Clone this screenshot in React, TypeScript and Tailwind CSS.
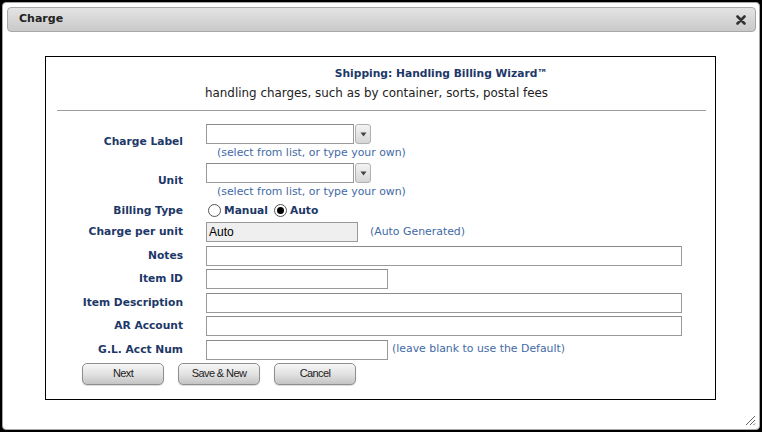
import React from 'react';

const labelCls = "w-[137px] shrink-0 pt-[1px] text-right text-[10.7px] font-bold text-[#1d3868] font-['DejaVu_Sans',sans-serif]";
const hintCls = "text-[10.9px] text-[#3f6aa6] font-['DejaVu_Sans',sans-serif] whitespace-nowrap";
const inputCls = "h-[20px] border border-[#9a9a9a] border-t-[#8a8a8a] bg-white";

const ComboField: React.FC<{ label: string }> = ({ label }) => (
  <div className="flex items-center h-[36px]">
    <div className={labelCls}>{label}</div>
    <div className="ml-[23px] flex flex-col">
      <div className="flex">
        <div className={`${inputCls} w-[148px]`} />
        <div className="ml-[1px] w-[16px] h-[20px] rounded-[3px] border border-[#b0b0b0] bg-gradient-to-b from-[#f4f4f4] to-[#d6d6d6] flex items-center justify-center">
          <svg width="7" height="5" viewBox="0 0 7 5">
            <path d="M0.5 0.5 L6.5 0.5 L3.5 4.5 Z" fill="#444" />
          </svg>
        </div>
      </div>
      <div className={`${hintCls} pl-[11px] leading-[15px] mt-[1px]`}>(select from list, or type your own)</div>
    </div>
  </div>
);

const TextRow: React.FC<{ label: string; width: string; hint?: string; hintGap?: string }> = ({ label, width, hint, hintGap }) => (
  <div className="flex items-center h-[20px]">
    <div className={labelCls}>{label}</div>
    <div className={`ml-[23px] ${inputCls} ${width}`} />
    {hint && <div className={`${hintCls} ${hintGap}`}>{hint}</div>}
  </div>
);

const Radio: React.FC<{ checked?: boolean }> = ({ checked }) => (
  <span className="w-[13px] h-[13px] rounded-full border border-[#555] bg-white flex items-center justify-center">
    {checked && <span className="w-[7px] h-[7px] rounded-full bg-black" />}
  </span>
);

const Btn: React.FC<{ children: React.ReactNode }> = ({ children }) => (
  <button className="w-[82px] h-[22px] rounded-[5px] border border-[#8e8e8e] bg-gradient-to-b from-[#f7f7f7] via-[#e2e2e2] to-[#c4c4c4] text-[11px] text-[#222] tracking-[-0.6px] font-['Liberation_Sans',Arial,sans-serif] shadow-[0_1px_1px_rgba(0,0,0,0.15)]">
    {children}
  </button>
);

export default function App() {
  return (
    <div className="w-[762px] h-[432px] bg-black p-[2px]">
      <div className="relative w-full h-full rounded-[4px] border border-[#a6a6a6] bg-white p-[4px] pr-[3px]">
        {/* title bar */}
        <div className="h-[25px] rounded-[4px] border border-[#a8a8a8] bg-gradient-to-b from-[#e4e4e4] to-[#c9c9c9] flex items-center justify-between pl-[11px] pr-[9px]">
          <span className="text-[11px] font-bold text-[#222] font-['DejaVu_Sans',sans-serif]">Charge</span>
          <svg width="10" height="10" viewBox="0 0 10 10">
            <path d="M1.5 1.5 L8.5 8.5 M8.5 1.5 L1.5 8.5" stroke="#333" strokeWidth="2.6" strokeLinecap="round" />
          </svg>
        </div>

        {/* wizard box */}
        <div className="ml-[38px] mt-[24px] w-[671px] h-[344px] border border-black">
          <div className="flex justify-end pr-[167px] pt-[10px]">
            <div className="flex flex-col items-end">
              <div className="text-[10.7px] leading-[14px] font-bold text-[#1d3868] font-['DejaVu_Sans',sans-serif]">
                Shipping: Handling Billing Wizard™
              </div>
              <div className="mt-[4px] text-[11.9px] leading-[16px] text-[#222] font-['DejaVu_Sans',sans-serif]">
                handling charges, such as by container, sorts, postal fees
              </div>
            </div>
          </div>
          <div className="mt-[9px] ml-[11px] mr-[9px] border-t border-[#9c9c9c]" />

          <div className="mt-[13px] flex flex-col">
            <ComboField label="Charge Label" />
            <div className="mt-[3px]">
              <ComboField label="Unit" />
            </div>
            <div className="flex items-center h-[22px] mt-[1px]">
              <div className={labelCls}>Billing Type</div>
              <div className="ml-[25px] flex items-center gap-[3px] text-[10.7px] font-bold text-[#1d3868] font-['DejaVu_Sans',sans-serif]">
                <Radio />
                <span>Manual</span>
                <span className="ml-[3px]"><Radio checked /></span>
                <span>Auto</span>
              </div>
            </div>
            <div className="flex flex-col gap-[3.5px]">
              <div className="flex items-center h-[20px]">
                <div className={labelCls}>Charge per unit</div>
                <div className="ml-[23px] w-[152px] h-[20px] border border-[#9a9a9a] bg-[#efefef] flex items-center px-[2px] text-[12px] text-black font-['Liberation_Sans',Arial,sans-serif]">
                  Auto
                </div>
                <div className={`${hintCls} ml-[12px]`}>(Auto Generated)</div>
              </div>
              <TextRow label="Notes" width="w-[476px]" />
              <TextRow label="Item ID" width="w-[182px]" />
              <TextRow label="Item Description" width="w-[476px]" />
              <TextRow label="AR Account" width="w-[476px]" />
              <TextRow label="G.L. Acct Num" width="w-[182px]" hint="(leave blank to use the Default)" hintGap="ml-[4px]" />
            </div>
            <div className="mt-[3px] ml-[36px] flex gap-[14px]">
              <Btn>Next</Btn>
              <Btn>Save &amp; New</Btn>
              <Btn>Cancel</Btn>
            </div>
          </div>
        </div>

        {/* resize grip */}
        <svg className="absolute right-[3px] bottom-[3px]" width="12" height="12" viewBox="0 0 12 12">
          <path d="M11 2 L2 11 M11 6 L6 11 M11 9.5 L9.5 11" stroke="#666" strokeWidth="1" />
        </svg>
      </div>
    </div>
  );
}
